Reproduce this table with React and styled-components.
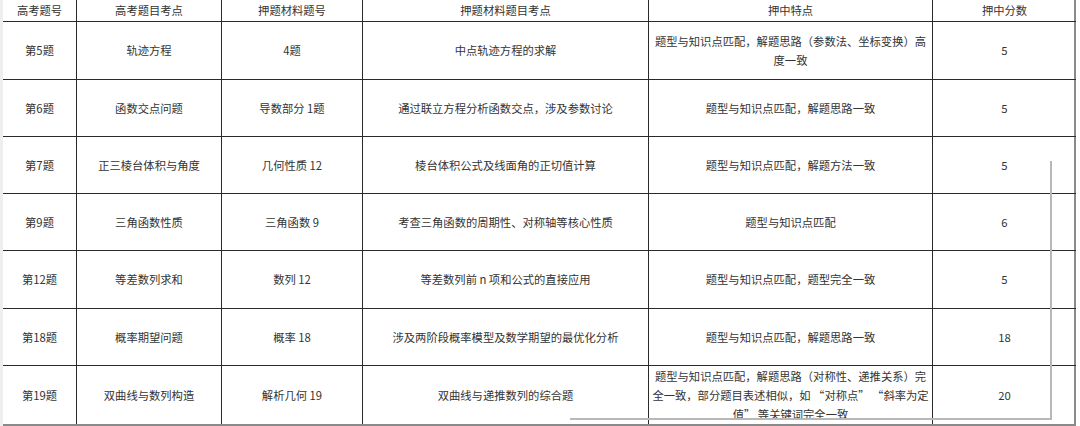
import React from "react";
import styled, { createGlobalStyle } from "styled-components";

const GlobalStyle = createGlobalStyle`
  html, body {
    margin: 0;
    padding: 0;
    background: #ffffff;
  }
  body {
    font-family: "Noto Sans CJK SC", "Noto Sans", sans-serif;
    color: #333;
  }
`;

const Page = styled.div`
  position: relative;
  width: 1080px;
  height: 426px;
  overflow: hidden;
  background: linear-gradient(to right, #eeeeee 0, #eeeeee 3px, #ffffff 3px);
`;

const Grid = styled.div`
  margin-left: 3px;
  width: 1073px;
  display: grid;
  grid-template-columns: 74px 145px 141px 286px 284px 143px;
  grid-template-rows: 22px 58px 57px 57px 57px 58px 57px 58px;
  background: #fff;
  border-right: 2px solid #8a8a8a;
  border-bottom: 2px solid #8a8a8a;
  box-sizing: border-box;
`;

const Cell = styled.div`
  box-sizing: border-box;
  display: flex;
  align-items: center;
  justify-content: center;
  text-align: center;
  padding: 0 5px;
  font-size: 11.3px;
  line-height: 19px;
  color: #333;
  white-space: nowrap;
  border-bottom: 1px solid #2a2a2a;
  border-right: ${({ $last }) => ($last ? "none" : "1px solid #2a2a2a")};
  ${({ $lastRow }) => ($lastRow ? "border-bottom: none;" : "")}
`;

const HeadCell = styled(Cell)`
  align-items: flex-start;
  padding-top: 2px;
  line-height: 16px;
`;

const Shadow = styled.div`
  position: absolute;
  left: 570px;
  top: 161px;
  width: 480px;
  height: 257px;
  border-right: 2px solid #b8b8b8;
  border-bottom: 2px solid #b8b8b8;
  pointer-events: none;
`;

const headers = ["高考题号", "高考题目考点", "押题材料题号", "押题材料题目考点", "押中特点", "押中分数"];

const rows = [
  ["第5题", "轨迹方程", "4题", "中点轨迹方程的求解", ["题型与知识点匹配，解题思路（参数法、坐标变换）高", "度一致"], "5"],
  ["第6题", "函数交点问题", "导数部分 1题", "通过联立方程分析函数交点，涉及参数讨论", ["题型与知识点匹配，解题思路一致"], "5"],
  ["第7题", "正三棱台体积与角度", "几何性质 12", "棱台体积公式及线面角的正切值计算", ["题型与知识点匹配，解题方法一致"], "5"],
  ["第9题", "三角函数性质", "三角函数 9", "考查三角函数的周期性、对称轴等核心性质", ["题型与知识点匹配"], "6"],
  ["第12题", "等差数列求和", "数列 12", "等差数列前 n 项和公式的直接应用", ["题型与知识点匹配，题型完全一致"], "5"],
  ["第18题", "概率期望问题", "概率 18", "涉及两阶段概率模型及数学期望的最优化分析", ["题型与知识点匹配，解题思路一致"], "18"],
  [
    "第19题",
    "双曲线与数列构造",
    "解析几何 19",
    "双曲线与递推数列的综合题",
    ["题型与知识点匹配，解题思路（对称性、递推关系）完", "全一致，部分题目表述相似，如 “对称点” “斜率为定", "值” 等关键词完全一致"],
    "20",
  ],
];

export default function App() {
  return (
    <Page>
      <GlobalStyle />
      <Grid>
        {headers.map((h, i) => (
          <HeadCell key={h} $last={i === headers.length - 1}>
            {h}
          </HeadCell>
        ))}
        {rows.map((row, r) =>
          row.map((val, c) => (
            <Cell key={`${r}-${c}`} $last={c === row.length - 1} $lastRow={r === rows.length - 1}>
              {Array.isArray(val) ? (
                <span>
                  {val.map((line, k) => (
                    <React.Fragment key={k}>
                      {k > 0 && <br />}
                      {line}
                    </React.Fragment>
                  ))}
                </span>
              ) : (
                val
              )}
            </Cell>
          ))
        )}
      </Grid>
      <Shadow />
    </Page>
  );
}
